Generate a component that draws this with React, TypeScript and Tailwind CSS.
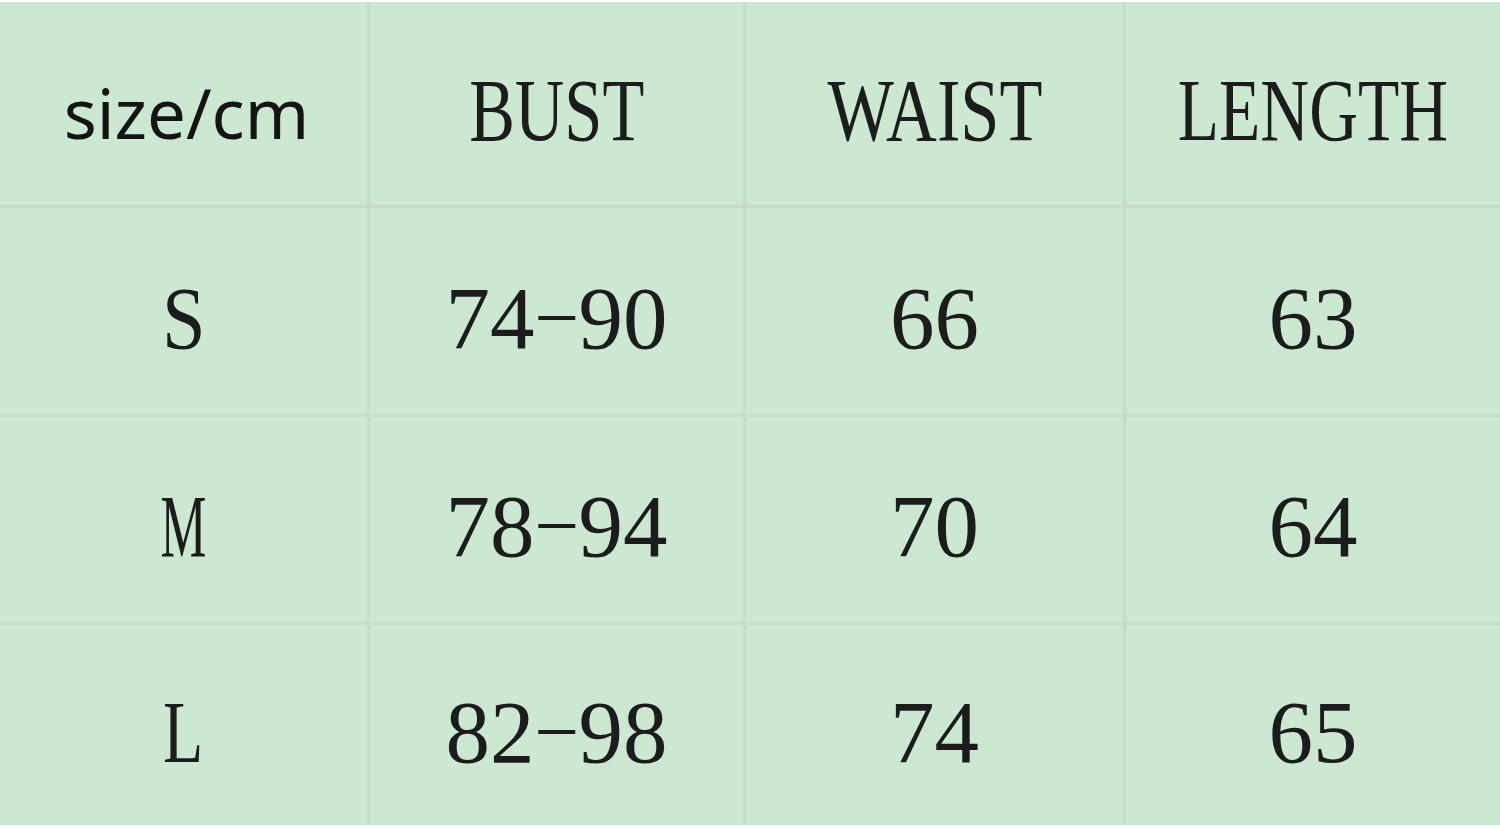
const serif = "font-['Liberation_Serif',serif] text-[89px] leading-none text-[#1c1c1c]";

function Cell({ children, className = "" }: { children: React.ReactNode; className?: string }) {
  return (
    <div className={`flex items-center justify-center bg-[#cce8d0] pt-[14px] ${className}`}>
      {children}
    </div>
  );
}

function Squeezed({ text, scale }: { text: string; scale: string }) {
  return <span className={`inline-block ${scale}`}>{text}</span>;
}

// the source font draws the range dash as wide as a digit, thin, at mid height
function Range({ value }: { value: string }) {
  const [from, to] = value.split("-");
  return (
    <span className="flex items-center">
      <span>{from}</span>
      <span className="inline-block w-[44px] -translate-y-[5px] text-center">
        <span className="inline-block scale-x-[1.6] scale-y-[0.6]">-</span>
      </span>
      <span>{to}</span>
    </span>
  );
}

const rows = [
  { size: "S", scale: "scale-x-[0.88]", bust: "74-90", waist: "66", length: "63" },
  { size: "M", scale: "scale-x-[0.58]", bust: "78-94", waist: "70", length: "64" },
  { size: "L", scale: "scale-x-[0.74]", bust: "82-98", waist: "74", length: "65" },
];

export default function App() {
  return (
    <div className="h-[829px] w-[1500px] overflow-hidden bg-white pt-[2px]">
      <div className="grid grid-cols-[367px_373px_377px_1fr] grid-rows-[203px_206px_205px_200px] gap-[3px] bg-[#c6dbc9]">
        <div className="flex items-center justify-center bg-[#cce8d0] pl-[6px] pt-[18px] font-['Noto_Sans',sans-serif] text-[69px] leading-none text-[#141414]">
          size/cm
        </div>
        <Cell className={serif}>
          <Squeezed text="BUST" scale="scale-x-[0.77]" />
        </Cell>
        <Cell className={serif}>
          <Squeezed text="WAIST" scale="scale-x-[0.79]" />
        </Cell>
        <Cell className={serif}>
          <Squeezed text="LENGTH" scale="scale-x-[0.76]" />
        </Cell>
        {rows.map((r) => (
          <div key={r.size} className="contents">
            <Cell className={serif}>
              <Squeezed text={r.size} scale={r.scale} />
            </Cell>
            <Cell className={serif}>
              <Range value={r.bust} />
            </Cell>
            <Cell className={serif}>{r.waist}</Cell>
            <Cell className={serif}>{r.length}</Cell>
          </div>
        ))}
      </div>
    </div>
  );
}
